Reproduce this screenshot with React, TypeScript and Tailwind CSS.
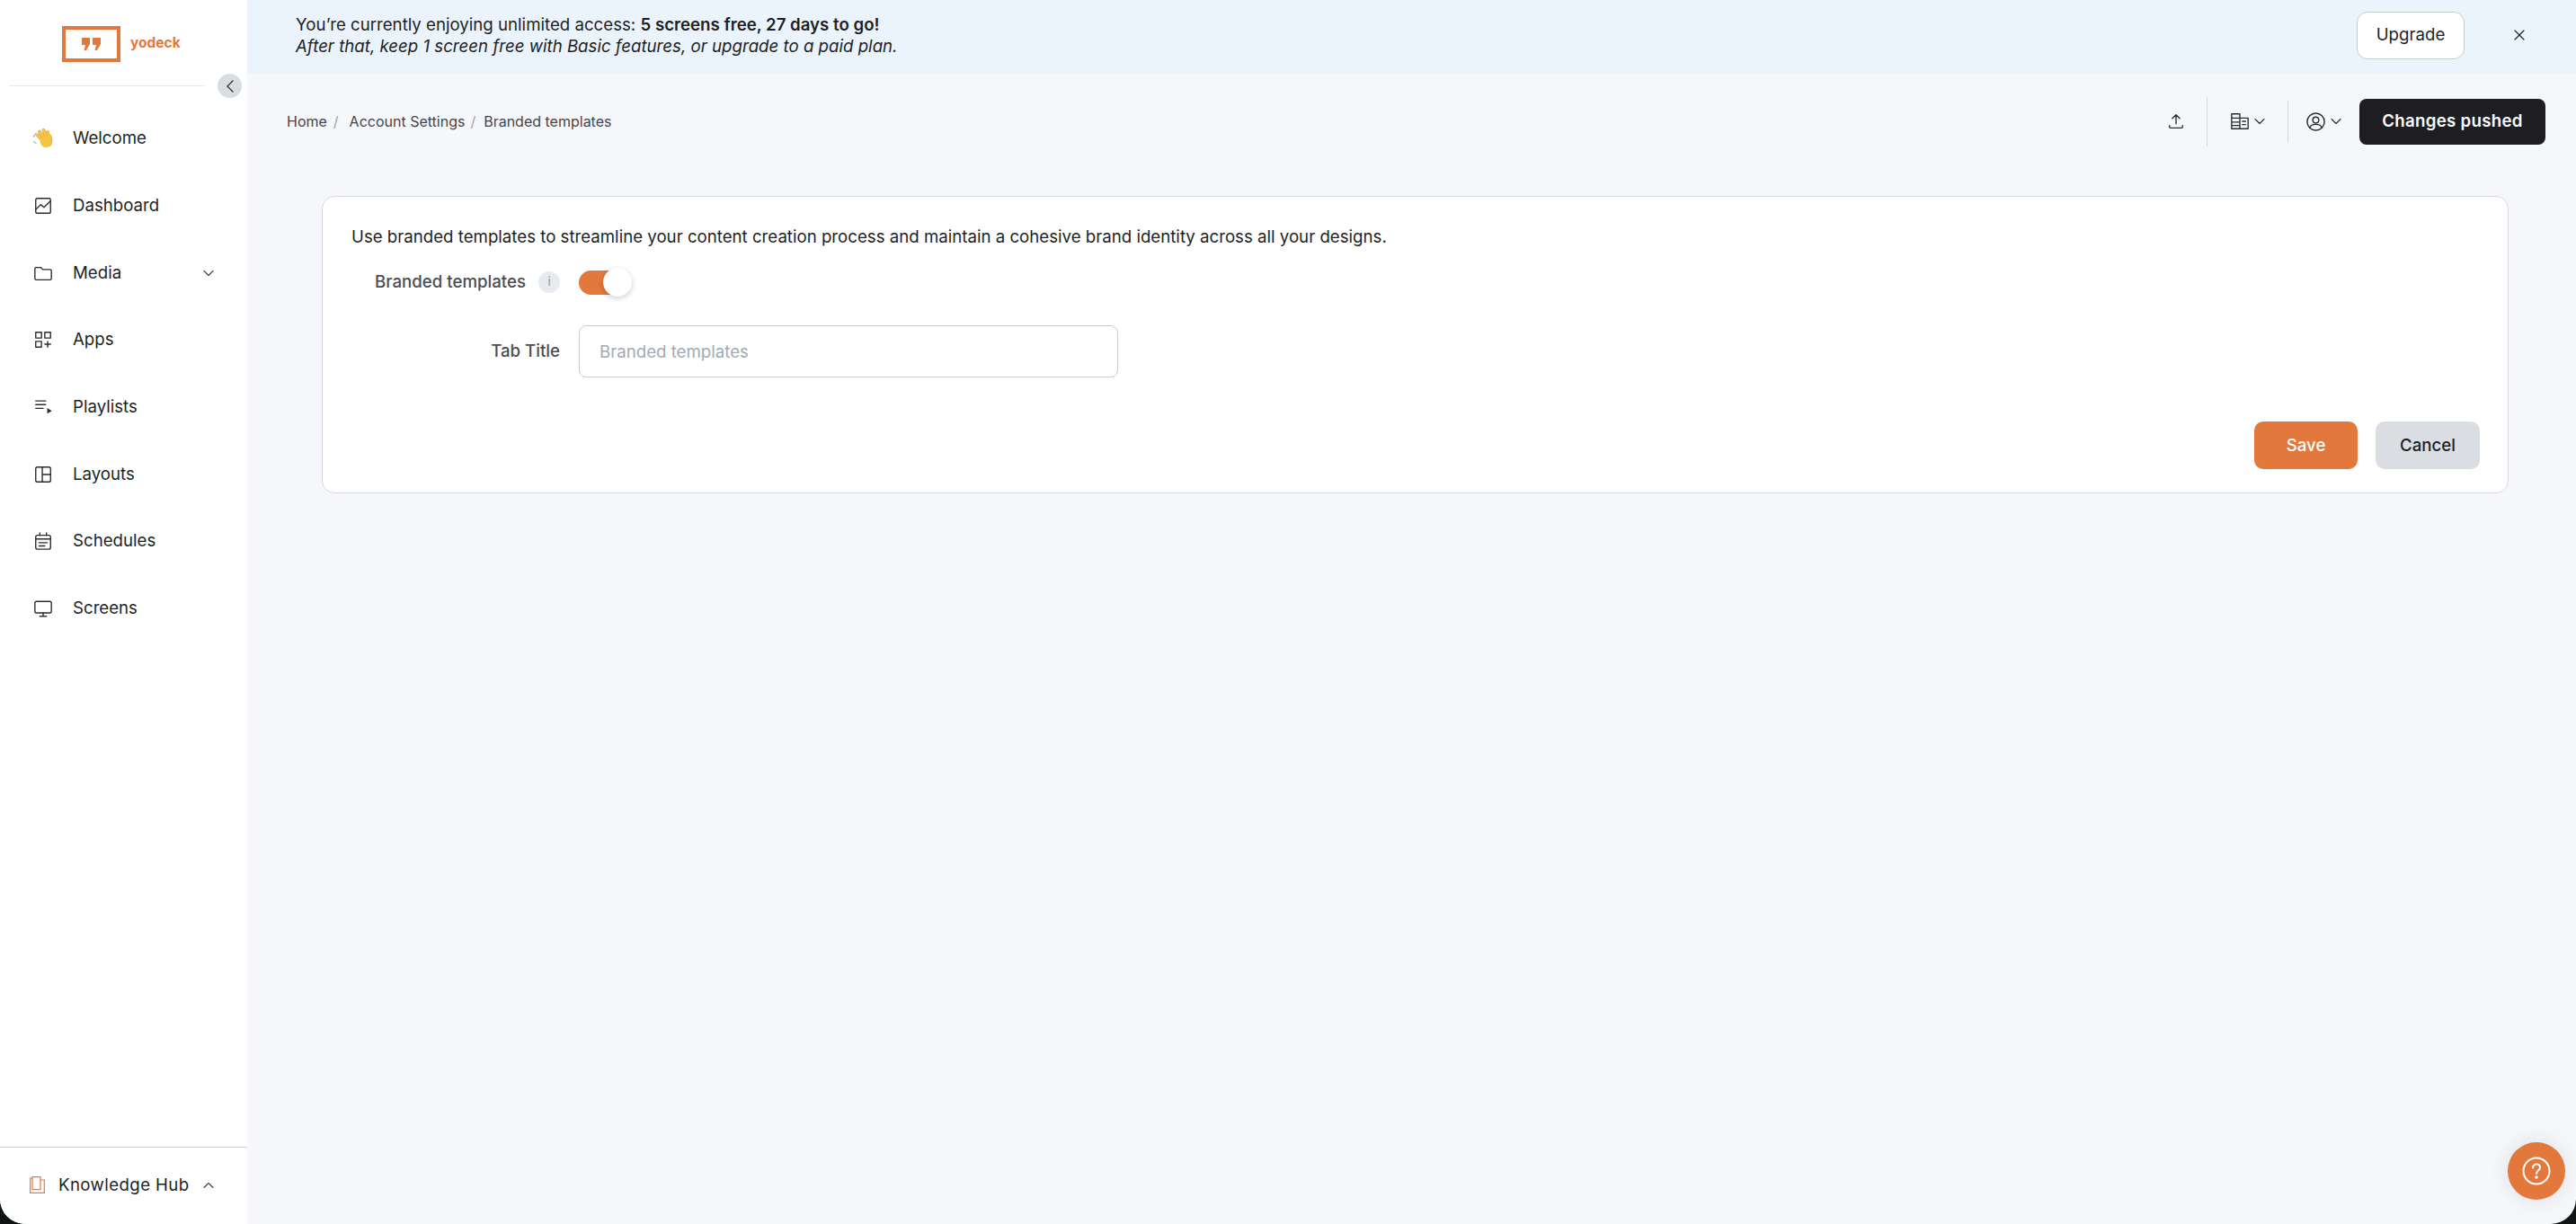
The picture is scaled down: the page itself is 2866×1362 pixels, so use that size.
import { ChevronDown, ChevronLeft, ChevronUp, X } from 'lucide-react'
import type { ReactNode } from 'react'

function Ico({ children, className = 'w-[22px] h-[22px]' }: { children: ReactNode; className?: string }) {
  return (
    <svg viewBox="0 0 24 24" fill="none" stroke="currentColor" strokeWidth="1.5" strokeLinecap="round" strokeLinejoin="round" className={className}>
      {children}
    </svg>
  )
}

function WaveIcon() {
  return (
    <svg viewBox="0 0 24 24" className="w-[24px] h-[24px]" strokeLinecap="round" fill="none">
      <path d="M1.5 10 L4 6.5 M1.5 15.5 L4 17.5" stroke="#b9bec8" strokeWidth="1.6" />
      <g stroke="#d99a22" strokeWidth="3.6">
        <path d="M11 14 L6 8.5" />
        <path d="M13 12 L8 4.5" />
        <path d="M15.5 11 L12.5 2.8" />
        <path d="M18.5 11 L17 5" />
      </g>
      <g stroke="#f7c544" strokeWidth="2.8">
        <path d="M11 14 L6 8.5" />
        <path d="M13 12 L8 4.5" />
        <path d="M15.5 11 L12.5 2.8" />
        <path d="M18.5 11 L17 5" />
      </g>
      <path d="M20.5 8.5 C22.5 13 22.5 18 19.5 20.5 C16.5 23 12 22.5 10 19.5 C8.5 17 8 14 9 12.5 L18 10 Z" fill="#f7c544" />
      <path d="M20.5 8.5 C22.5 13 22.5 18 19.5 20.5" stroke="#d99a22" strokeWidth="0.7" />
    </svg>
  )
}

const navItems: { label: string; icon: ReactNode; chevron?: boolean }[] = [
  { label: 'Welcome', icon: <WaveIcon /> },
  {
    label: 'Dashboard',
    icon: (
      <Ico>
        <rect x="3" y="3" width="18" height="18" rx="2" />
        <path d="M3.5 16 L9 10.5 L13 14 L20.5 6.5" />
      </Ico>
    ),
  },
  {
    label: 'Media',
    chevron: true,
    icon: (
      <Ico>
        <path d="M2 6.5 C2 5.4 2.7 5 3.5 5 H9 L11.5 7.5 H20.5 C21.4 7.5 22 8.1 22 9 V18.5 C22 19.4 21.4 20 20.5 20 H3.5 C2.6 20 2 19.4 2 18.5 Z" />
      </Ico>
    ),
  },
  {
    label: 'Apps',
    icon: (
      <Ico>
        <rect x="3" y="3" width="7" height="7" />
        <rect x="14" y="3" width="7" height="7" />
        <rect x="3" y="14" width="7" height="7" />
        <path d="M17.5 14 V21 M14 17.5 H21" />
      </Ico>
    ),
  },
  {
    label: 'Playlists',
    icon: (
      <Ico>
        <path d="M3 4.5 H15 M3 9 H15 M3 13.5 H12" />
        <path d="M17 13 L22.5 16.5 L17 20 Z" fill="currentColor" stroke="none" />
      </Ico>
    ),
  },
  {
    label: 'Layouts',
    icon: (
      <Ico>
        <rect x="3" y="3" width="18" height="18" rx="2" />
        <path d="M11 3 V21 M11 12 H21" />
      </Ico>
    ),
  },
  {
    label: 'Schedules',
    icon: (
      <Ico>
        <rect x="3" y="5" width="18" height="17" rx="2" />
        <path d="M8 2 V5 M16 2 V5 M3 9.5 H21 M7 14 H17 M7 18 H14" />
      </Ico>
    ),
  },
  {
    label: 'Screens',
    icon: (
      <Ico>
        <rect x="2" y="3.5" width="20" height="14" rx="2" />
        <path d="M12 17.5 V21 M8 21.5 H16" />
      </Ico>
    ),
  },
]

function Sidebar() {
  return (
    <aside className="relative w-[275px] shrink-0 h-full bg-white flex flex-col">
      <div className="h-[96px] mx-[10px] w-[217px] border-b border-[#e6e8ed] flex items-start pt-[29px] pl-[59px] gap-[11px]">
        <div className="w-[65px] h-[40px] border-[4px] border-[#e2783c] flex items-center justify-center gap-[2px]">
          <svg viewBox="0 0 22 14" className="w-[22px] h-[14px]" fill="#e2783c">
            <path d="M0 0 H9 V7 L5 14 H2.5 L4 8 H0 Z M12 0 H21 V7 L17 14 H14.5 L16 8 H12 Z" />
          </svg>
        </div>
        <span className="text-[15.5px] font-bold text-[#e2783c] leading-[38px]">yodeck</span>
      </div>
      <button className="absolute left-[242px] top-[82px] w-[27px] h-[27px] rounded-full bg-[#d9dce1] flex items-center justify-center text-[#1f2025]">
        <ChevronLeft className="w-[24px] h-[24px]" strokeWidth={1.2} />
      </button>

      <nav className="pt-[21px] flex-1">
        {navItems.map((item) => (
          <div key={item.label} className="h-[74.67px] flex items-center pl-[36px] pr-[33px] text-[#1e1f24]">
            <span className="w-[24px] flex justify-center mr-[21px] text-[#2b2c31]">{item.icon}</span>
            <span className="text-[18.66px] flex-1">{item.label}</span>
            {item.chevron && <ChevronDown className="w-[20px] h-[20px] text-[#44454b]" strokeWidth={1.3} />}
          </div>
        ))}
      </nav>

      <div className="h-[86px] border-t border-[#c8c9ce] flex items-center pl-[33px] text-[#1e1f24] pb-[2px]">
        <svg viewBox="0 0 17 19" className="w-[17px] h-[19px] mr-[15px] text-[#e2783c]" fill="none" stroke="currentColor" strokeWidth="1.2">
          <rect x="3" y="0.6" width="9" height="14" />
          <path d="M3 2 H0.7 V18.3 H16.3 V4 H12" />
        </svg>
        <span className="text-[18.66px] tracking-[0.4px]">Knowledge Hub</span>
        <ChevronUp className="w-[20px] h-[20px] ml-[11px] text-[#44454b]" strokeWidth={1.3} />
      </div>
    </aside>
  )
}

function Banner() {
  return (
    <div className="h-[82px] bg-[#ebf3fc] flex items-center pl-[54px] pr-[53px] text-[#1e1f24]">
      <div className="flex-1 text-[18.66px] leading-[24px] pb-[2px]">
        <p>
          You’re currently enjoying unlimited access: <span className="font-semibold">5 screens free, 27 days to go!</span>
        </p>
        <p className="italic">After that, keep 1 screen free with Basic features, or upgrade to a paid plan.</p>
      </div>
      <button className="w-[120px] h-[53px] mb-[4px] bg-white border border-[#c8cbd2] rounded-[12px] text-[18.66px]">Upgrade</button>
      <X className="w-[20px] h-[20px] ml-[51px] mb-[4px]" strokeWidth={1.4} />
    </div>
  )
}

function TopBar() {
  return (
    <div className="h-[106px] flex items-center pl-[44px] pr-[34px]">
      <div className="flex-1 flex items-center text-[16px] text-[#44464c]">
        <span>Home</span>
        <span className="text-[#a0a4ab] ml-[7px] mr-[12px]">/</span>
        <span>Account Settings</span>
        <span className="text-[#a0a4ab] ml-[6px] mr-[9px]">/</span>
        <span>Branded templates</span>
      </div>
      <div className="flex items-center text-[#2b2c31]">
        <Ico className="w-[22px] h-[22px]">
          <path d="M12 15 V4 M7.5 8.5 L12 4 L16.5 8.5 M4 17 V18.5 C4 19.5 4.5 20 5.5 20 H18.5 C19.5 20 20 19.5 20 18.5 V17" />
        </Ico>
        <div className="w-px h-[55px] bg-[#d6d8dd] ml-[23px] mr-[25px]" />
        <Ico className="w-[22px] h-[22px]">
          <path d="M2 3 H12 V21 H2 Z M12 8 H22 V21 H12 M2 8 H12 M2 13 H12 M2 17 H12 M15 12 H19 M15 16 H19" />
        </Ico>
        <ChevronDown className="w-[20px] h-[20px] ml-[1px]" strokeWidth={1.3} />
        <div className="w-px h-[47px] bg-[#d6d8dd] ml-[21px] mr-[19px]" />
        <Ico className="w-[23px] h-[23px]">
          <circle cx="12" cy="12" r="10" />
          <circle cx="12" cy="10" r="3.5" />
          <path d="M5 19 C6 15.5 9 15 12 15 C15 15 18 15.5 19 19" />
        </Ico>
        <ChevronDown className="w-[20px] h-[20px] ml-[1px]" strokeWidth={1.3} />
        <button className="ml-[16px] w-[207px] h-[51px] bg-[#1e1e22] rounded-[8px] text-white text-[18.66px] tracking-[0.3px] font-semibold">Changes pushed</button>
      </div>
    </div>
  )
}

function Card() {
  return (
    <div className="ml-[83px] mr-[75px] mt-[30px] h-[331px] bg-white border border-[#d5d8e2] rounded-[14px] pt-[31px] pl-[32px] pr-[31px]">
      <p className="text-[18.66px] leading-[27px] text-[#1e1f24]">
        Use branded templates to streamline your content creation process and maintain a cohesive brand identity across all your designs.
      </p>
      <div className="flex items-center mt-[19px] h-[36px]">
        <div className="w-[232px] flex items-center justify-end">
          <span className="text-[18.66px] font-medium text-[#4b4d54]">Branded templates</span>
          <span className="ml-[14px] w-[24px] h-[24px] rounded-full bg-[#e7eaf0] flex items-center justify-center text-[13px] text-[#8f94a0]">i</span>
        </div>
        <div className="ml-[21px] relative w-[56px] h-[27px] rounded-full bg-[#e2783c]">
          <div className="absolute left-[27px] top-[-3px] w-[32px] h-[32px] rounded-full bg-white shadow-[0_2px_6px_rgba(0,0,0,0.2)]" />
        </div>
      </div>
      <div className="flex items-center mt-[30px]">
        <label className="w-[232px] text-right text-[18.66px] font-medium text-[#4b4d54]">Tab Title</label>
        <input
          placeholder="Branded templates"
          className="ml-[21px] w-[600px] h-[58px] border border-[#c8cbd2] rounded-[8px] px-[22px] text-[18.66px] placeholder:text-[#a3a9b5] outline-none"
        />
      </div>
      <div className="flex justify-end mt-[49px]">
        <button className="w-[115px] h-[53px] rounded-[10px] bg-[#e2783c] text-white text-[18.66px] font-medium">Save</button>
        <button className="w-[116px] h-[53px] ml-[20px] rounded-[10px] bg-[#dadde2] text-[#1e1f24] text-[18.66px] font-medium">Cancel</button>
      </div>
    </div>
  )
}

export default function App() {
  return (
    <div className="h-screen w-full bg-[#101412] overflow-hidden font-['Inter',sans-serif]">
      <div className="relative h-full flex rounded-b-[28px] overflow-hidden bg-[#f5f7fb]">
        <Sidebar />
        <main className="flex-1 min-w-0">
          <Banner />
          <TopBar />
          <Card />
        </main>
        <button className="absolute left-[2790px] top-[1271px] w-[64px] h-[64px] rounded-full bg-[#e2783c] flex items-center justify-center shadow-[0_0_24px_rgba(0,0,0,0.1)] text-white">
          <svg viewBox="0 0 32 32" className="w-[32px] h-[32px]" fill="none" stroke="currentColor" strokeWidth="2" strokeLinecap="round">
            <circle cx="16" cy="16" r="14.5" />
            <path d="M12 12.5 C12 10 14 8.5 16 8.5 C18.5 8.5 20 10.2 20 12.2 C20 15 16 15.5 16 19" />
            <circle cx="16" cy="23" r="0.8" fill="currentColor" />
          </svg>
        </button>
      </div>
    </div>
  )
}
